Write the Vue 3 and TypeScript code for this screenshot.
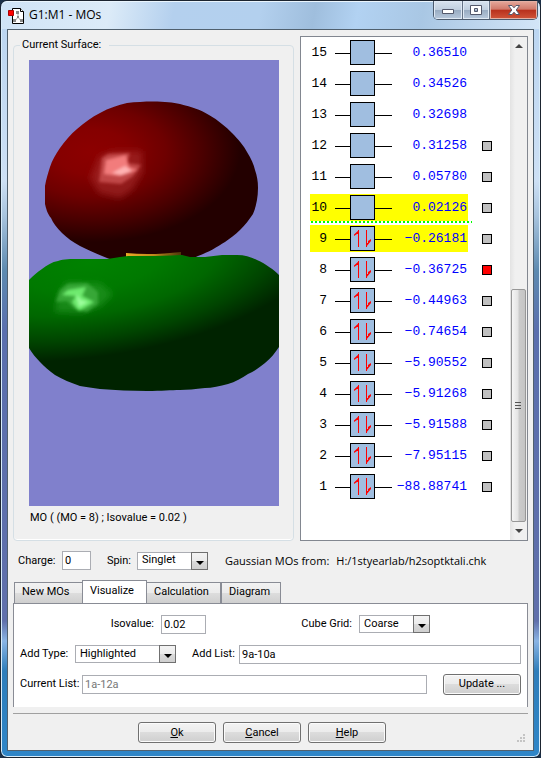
<script setup lang="ts">
import { ref } from 'vue'

interface Level {
  id: number
  energy: string
  occupied: boolean
  cube: boolean
}

const energies: string[] = [
  '0.36510', '0.34526', '0.32698', '0.31258', '0.05780', '0.02126',
  '-0.26181', '-0.36725', '-0.44963', '-0.74654', '-5.90552',
  '-5.91268', '-5.91588', '-7.95115', '-88.88741',
]

const levels: Level[] = energies.map((energy, i) => {
  const id = energies.length - i
  return { id, energy: energy.replace('-', '−'), occupied: id <= 9, cube: id <= 12 }
})

const highlighted = ref<number[]>([9, 10])
const current = ref<number>(8)
const tabs: string[] = ['New MOs', 'Visualize', 'Calculation', 'Diagram']
const activeTab = ref<string>('Visualize')
const charge = ref('0')
const spin = ref('Singlet')
const isovalue = ref('0.02')
const cubeGrid = ref('Coarse')
const addType = ref('Highlighted')
const addList = ref('9a-10a')
const currentList = ref('1a-12a')

function toggle(id: number): void {
  highlighted.value = highlighted.value.includes(id)
    ? highlighted.value.filter((n) => n !== id)
    : [...highlighted.value, id]
}
</script>

<template>
  <div class="window">
    <header class="titlebar">
      <svg class="app-icon" width="18" height="18" viewBox="0 0 18 18" aria-hidden="true">
        <path d="M4.500 1.500H12.500L15.500 4.500V16.500H4.500Z" fill="#fff" stroke="#000" />
        <path d="M12.500 1.500V4.500H15.500" fill="#fff" stroke="#000" />
        <path d="M10 5V10L7 14M10 10L13 14" fill="none" stroke="#aaa" />
        <path d="M8 4h3v3h-3zM9 9h2v2h-2zM5 12h3v3h-3zM12 12h3v3h-3z" fill="#888" />
        <path d="M.5 3.500h5v5h-5z" fill="#f00" stroke="#a00" />
      </svg>
      <h1 class="title">G1:M1 - MOs</h1>
      <div class="caption-buttons">
        <button type="button" class="cap" aria-label="Minimize">
          <svg width="14" height="12" viewBox="0 0 14 12"><path d="M1.500 5.500h11v4h-11z" fill="#fff" stroke="#53586b" /></svg>
        </button>
        <button type="button" class="cap" aria-label="Maximize">
          <svg width="14" height="12" viewBox="0 0 14 12"><path d="M1.500 1.500h11v9h-11zM5.500 4.500v3h3v-3z" fill="#fff" fill-rule="evenodd" stroke="#53586b" /></svg>
        </button>
        <button type="button" class="cap close" aria-label="Close">
          <svg width="14" height="12" viewBox="0 0 14 12"><path d="M1.500 1.500H5L7 3.800L9 1.500H12.500L9.200 6L12.500 10.500H9L7 8.200L5 10.500H1.500L4.800 6Z" fill="#fff" stroke="#53586b" /></svg>
        </button>
      </div>
    </header>

    <main class="client">
      <section class="upper">
        <fieldset class="surface">
          <legend>Current Surface:</legend>
          <svg class="canvas" viewBox="29 60 250 446" role="img" aria-label="Molecular orbital surface">
            <defs>
              <radialGradient id="red" gradientUnits="userSpaceOnUse" cx="0" cy="0" r="1" gradientTransform="translate(92 152) scale(148 90)">
                <stop offset="0" stop-color="#8c0000" />
                <stop offset=".25" stop-color="#850000" />
                <stop offset=".5" stop-color="#6e0000" />
                <stop offset=".75" stop-color="#4a0000" />
                <stop offset="1" stop-color="#230000" />
              </radialGradient>
              <radialGradient id="green" gradientUnits="userSpaceOnUse" cx="0" cy="0" r="1" gradientTransform="translate(90 262) rotate(-8) scale(240 95)">
                <stop offset="0" stop-color="#008200" />
                <stop offset=".3" stop-color="#007900" />
                <stop offset=".55" stop-color="#006700" />
                <stop offset=".8" stop-color="#004400" />
                <stop offset="1" stop-color="#002300" />
              </radialGradient>
              <linearGradient id="bond">
                <stop offset="0" stop-color="#e9aa25" />
                <stop offset=".5" stop-color="#c08a1c" />
                <stop offset="1" stop-color="#4d360a" />
              </linearGradient>
              <filter id="soft" x="-30%" y="-30%" width="160%" height="160%"><feGaussianBlur stdDeviation="3" /></filter>
              <filter id="fine" x="-30%" y="-30%" width="160%" height="160%"><feGaussianBlur stdDeviation="1.500" /></filter>
            </defs>
            <rect x="29" y="60" width="250" height="446" fill="#8080cc" />
            <path fill="url(#red)" d="M153 101.500C165 101.500 173 102.500 180 104C192 107 201 110 209 115C218 120 226 127 232 133C238 139 244 146 247 152C251 158 254 165 255 170C257 176 258 181 258 188C258 198 256 207 253 214C249 220 245 225 240 230C235 235 230 238 225 242C217 247 209 252 198 256L185 262H118L107 258C97 254 88 250 80 246C73 242 67 238 62 233C57 228 53 223 51 218C47 213 46 208 45 204V186C46 180 48 173 50 167C52 160 56 154 60 148C65 141 71 134 77 129C84 123 92 117 100 113C109 108 118 105 127 103C136 102 144 101.500 153 101.500Z" />
            <g filter="url(#soft)">
              <path d="M90 178L99 156L112 151L142 151L143 172L132 190L120 198L99 193Z" fill="#a93232" opacity=".55" />
            </g>
            <g filter="url(#fine)">
              <path d="M99 182L102 158L108 154L130 153L127 163L141 165L133 176L121 184Z" fill="#cf5555" opacity=".75" />
              <path d="M104 174L106 160L126 155L129 167L138 170L120 176Z" fill="#f27c7c" />
              <path d="M112 173L125 166L132 171L121 175Z" fill="#ffb3b3" />
            </g>
            <path d="M126 253C145 255 163 254 181 252V260H126Z" fill="url(#bond)" />
            <path fill="url(#green)" d="M29 280C33 276 37 272 42 269C47 265 52 262 58 261C64 259 70 259 80 259H107C112 258 116 258 120 257L128 256H155L171 255.500L182 255L190 257H205L222 255H237C245 255 251 257 257 260C266 264 274 270 279 275V347C275 353 271 358 265 363C260 367 255 371 248 374C242 378 235 382 228 384C220 386 212 388 205 388C195 389 187 390 180 390C171 390 162 391 147 391C132 391 115 390 100 389C93 388 86 387 80 386C71 383 62 379 55 375C49 371 44 366 40 362C36 358 32 353 29 348Z" />
            <g filter="url(#soft)">
              <path d="M55 312L58 294L66 282L100 283L113 294L101 306L82 313Z" fill="#279a27" opacity=".6" />
            </g>
            <g filter="url(#fine)">
              <path d="M56 302L60 290L68 284L87 283L98 292L98 304L87 312L75 309L67 301Z" fill="#3fae3f" opacity=".8" />
              <path d="M62 295L68 290L86 287L82 296L94 302L79 311L72 302L76 296Z" fill="#6eea6e" />
              <path d="M76 294L81 300L88 302L79 307Z" fill="#9dff9d" />
            </g>
          </svg>
          <p class="caption">MO ( (MO = 8) ; Isovalue = 0.02 )</p>
        </fieldset>

        <div class="diagram">
          <div class="levels">
            <div v-for="level in levels" :key="level.id" class="level" :class="{ fermi: level.id === 10 }">
              <button type="button" class="orbital" :class="{ marked: highlighted.includes(level.id) }" @click="toggle(level.id)">
                <span class="number">{{ level.id }}</span>
                <svg class="box" width="58" height="27" viewBox="0 0 58 27" aria-hidden="true">
                  <path d="M0 14.500H57" stroke="#000" />
                  <rect x="15.500" y="1.500" width="24" height="24" fill="#a0bee0" stroke="#000" />
                  <template v-if="level.occupied">
                    <path d="M23.500 22V5M31.500 5V22" fill="none" stroke="#f00" />
                    <path d="M24 5V9H22L19 11V9.500Z" fill="#f00" />
                    <path d="M31 22V18H33L33 16L36 14V16Z" fill="#f00" />
                  </template>
                </svg>
                <span class="energy">{{ level.energy }}</span>
              </button>
              <input v-if="level.cube" v-model="current" type="radio" name="current" class="cube" :value="level.id" :aria-label="'Show orbital ' + level.id" />
            </div>
          </div>
          <div class="scrollbar">
            <button type="button" class="arrow" aria-label="Scroll up">
              <svg width="8" height="4" viewBox="0 0 8 4"><path d="M4 0L8 4H0Z" fill="#444" /></svg>
            </button>
            <div class="track">
              <div class="thumb">
                <svg width="7" height="9" viewBox="0 0 7 9"><path d="M0 1.500H6M0 4.500H6M0 7.500H6" stroke="#555" /></svg>
              </div>
            </div>
            <button type="button" class="arrow" aria-label="Scroll down">
              <svg width="8" height="4" viewBox="0 0 8 4"><path d="M0 0H8L4 4Z" fill="#444" /></svg>
            </button>
          </div>
        </div>
      </section>

      <section class="molecule">
        <label for="charge">Charge:</label>
        <input id="charge" v-model="charge" class="field" type="text" />
        <label for="spin">Spin:</label>
        <span class="combo">
          <select id="spin" v-model="spin"><option>Singlet</option><option>Triplet</option></select>
          <span class="drop"><svg width="8" height="4" viewBox="0 0 8 4"><path d="M0 0H8L4 4Z" /></svg></span>
        </span>
        <p class="source"><span>Gaussian MOs from:</span><span>H:/1styearlab/h2soptktali.chk</span></p>
      </section>

      <nav class="tabs" role="tablist">
        <button v-for="tab in tabs" :key="tab" type="button" role="tab" class="tab" :class="{ active: tab === activeTab }" :aria-selected="tab === activeTab" @click="activeTab = tab">{{ tab }}</button>
      </nav>

      <section class="panel" role="tabpanel">
        <div class="row grid-row">
          <label for="iso">Isovalue:</label>
          <input id="iso" v-model="isovalue" class="field" type="text" />
          <label for="grid">Cube Grid:</label>
          <span class="combo">
            <select id="grid" v-model="cubeGrid"><option>Coarse</option><option>Medium</option><option>Fine</option></select>
            <span class="drop"><svg width="8" height="4" viewBox="0 0 8 4"><path d="M0 0H8L4 4Z" /></svg></span>
          </span>
        </div>
        <div class="row add-row">
          <label for="type">Add Type:</label>
          <span class="combo">
            <select id="type" v-model="addType"><option>Highlighted</option><option>Other</option></select>
            <span class="drop"><svg width="8" height="4" viewBox="0 0 8 4"><path d="M0 0H8L4 4Z" /></svg></span>
          </span>
          <label for="add" class="add-label">Add List:</label>
          <input id="add" v-model="addList" class="field" type="text" />
        </div>
        <div class="row list-row">
          <label for="list">Current List:</label>
          <input id="list" v-model="currentList" class="field muted" type="text" readonly />
          <button type="button" class="push">Update ...</button>
        </div>
      </section>

      <footer class="actions">
        <div class="buttons">
          <button type="button" class="push"><u>O</u>k</button>
          <button type="button" class="push"><u>C</u>ancel</button>
          <button type="button" class="push"><u>H</u>elp</button>
        </div>
        <svg class="grip" width="9" height="9" viewBox="0 0 9 9" aria-hidden="true">
          <path d="M6 0h2v2h-2zM3 3h2v2h-2zM6 3h2v2h-2zM0 6h2v2h-2zM3 6h2v2h-2zM6 6h2v2h-2z" fill="#c4c4c4" />
        </svg>
      </footer>
    </main>
  </div>
</template>

<style>
body {
  background: #1c3048;
}
</style>

<style scoped>
* {
  box-sizing: border-box;
}
.window {
  display: flex;
  flex-direction: column;
  min-height: 100vh;
  padding: 0 6px 6px;
  border: 1px solid #1b2430;
  border-radius: 7px;
  box-shadow: inset 0 0 0 1px #d8ecfa;
  background: linear-gradient(180deg, #b9d4f0 0, #cde0f5 180px, #a8c4de 215px, #5d8ab0 270px, #5a6fae 330px, #6070ab 620px, #8ab4e4 640px, #2e7dba 670px, #2f86c8 100%);
  font: 11px/14px Roboto, "Liberation Sans", sans-serif;
  color: #000;
}
button,
input,
select {
  font: inherit;
  color: inherit;
  margin: 0;
}
p {
  margin: 0;
}
.titlebar {
  display: flex;
  align-items: flex-start;
  flex: none;
  height: 28px;
  margin: 0 -5px;
  padding-left: 6px;
  border-radius: 6px 6px 0 0;
  border-top: 1px solid #eaf5fd;
  background: linear-gradient(100deg, #cfe3f6 0, #dcebf8 20%, #b4d0ee 32%, #b3d0ee 48%, #9fbedd 58%, #b2d2f2 66%, #a9c7e4 78%, #d3e5f7 100%);
}
.app-icon {
  margin-top: 5px;
}
.title {
  flex: 1;
  margin: 0;
  padding: 4px 0 0 3px;
  font: 12px/18px "Open Sans", "Noto Sans", sans-serif;
}
.caption-buttons {
  display: flex;
  margin: -1px 1px 0 0;
  border: 1px solid #4c5b6e;
  border-top: 0;
  border-radius: 0 0 5px 5px;
  overflow: hidden;
}
.cap {
  display: flex;
  align-items: center;
  justify-content: center;
  width: 27px;
  height: 18px;
  padding: 0;
  border: 0;
  border-right: 1px solid #647285;
  background: linear-gradient(#d8e3ef 0, #c0cfdf 48%, #98abc1 50%, #b8c9dc 100%);
  box-shadow: inset 0 0 0 1px #dfe9f4;
}
.cap:first-child {
  width: 29px;
}
.close {
  width: 47px;
  border-right: 0;
  background: linear-gradient(#e5a99c 0, #d0796a 46%, #b8301c 50%, #d0553a 100%);
  box-shadow: inset 0 0 0 1px #e3b0a4;
}
.client {
  display: flex;
  flex-direction: column;
  flex: 1;
  padding: 6px 5px 0;
  border: 1px solid #50606e;
  background: #f0f0f0;
}
.upper {
  display: flex;
  gap: 6px;
}
.surface {
  flex: 1;
  min-width: 0;
  margin: 2px 0 0;
  padding: 8px 14px 0 15px;
  border: 1px solid #d5dfe5;
  border-radius: 4px;
  box-shadow: inset 0 -1px #fff;
}
.surface legend {
  margin-left: -9px;
  padding: 0 8px 0 2px;
}
.canvas {
  display: block;
  width: 100%;
}
.caption {
  padding: 5px 1px;
}
.diagram {
  display: flex;
  width: 228px;
  border: 1px solid #828790;
  background: #fff;
}
.levels {
  flex: 1;
  padding-bottom: 38px;
  font: 13px/27px "Liberation Mono", monospace;
}
.level {
  display: flex;
  align-items: center;
  height: 31px;
  padding-left: 9px;
  position: relative;
}
.fermi::after {
  content: "";
  position: absolute;
  left: 10px;
  right: 38px;
  bottom: 0;
  height: 2px;
  background: repeating-linear-gradient(90deg, #00ff00 0 2px, transparent 2px 4px);
}
.orbital {
  display: grid;
  grid-template-columns: 17px 58px 66px;
  column-gap: 8px;
  width: 158px;
  height: 27px;
  padding: 0;
  border: 0;
  background: transparent;
  text-align: right;
}
.orbital.marked {
  background: #ff0;
}
.box {
  display: block;
}
.energy {
  justify-self: end;
  white-space: nowrap;
  color: #00f;
}
.cube {
  appearance: none;
  width: 10px;
  height: 10px;
  margin-left: 14px;
  border: 1px solid #000;
  background: #c0c0c0;
}
.cube:checked {
  background: #f00;
}
.scrollbar {
  display: flex;
  flex-direction: column;
  width: 17px;
  padding: 0 1px;
  background: linear-gradient(90deg, #e3e3e3, #f0f0f0 30%);
}
.arrow {
  display: flex;
  align-items: center;
  justify-content: center;
  height: 18px;
  padding: 0;
  border: 0;
  background: transparent;
}
.track {
  display: flex;
  flex-direction: column;
  justify-content: flex-end;
  flex: 1;
}
.thumb {
  display: flex;
  align-items: center;
  justify-content: center;
  height: 50%;
  border: 1px solid #979797;
  border-radius: 2px;
  background: linear-gradient(90deg, #f5f5f5, #e4e4e4 45%, #cbcbcb 55%, #c4c4c4);
}
.molecule {
  display: grid;
  grid-template-columns: 44px 29px 30px 71px 1fr;
  align-items: center;
  padding: 10px 5px;
}
.molecule label[for="spin"] {
  text-align: right;
  padding-right: 6px;
}
.molecule {
  grid-template-columns: 44px 29px 46px 71px 1fr;
}
.source {
  display: flex;
  gap: 7px;
  padding-left: 17px;
  font: 11px/16px "Open Sans", "Noto Sans", sans-serif;
  white-space: nowrap;
}
label {
  white-space: nowrap;
}
.field {
  width: 100%;
  min-width: 0;
  height: 19px;
  padding: 0 2px;
  border: 1px solid #abadb3;
  border-radius: 0;
  background: #fff;
}
.muted {
  color: #777;
}
.combo {
  display: grid;
  height: 18px;
}
.combo select {
  grid-area: 1 / 1;
  appearance: none;
  width: 100%;
  min-width: 0;
  height: 18px;
  padding: 0 20px 1px 4px;
  border: 1px solid #abadb3;
  border-radius: 0;
  background: #fff;
}
.drop {
  grid-area: 1 / 1;
  justify-self: end;
  display: flex;
  align-items: flex-end;
  justify-content: center;
  width: 17px;
  padding-bottom: 4px;
  border: 1px solid #707070;
  background: linear-gradient(#f3f3f3 0, #ebebeb 50%, #dadada 50%, #cfcfcf);
  pointer-events: none;
}
.tabs {
  display: flex;
  align-items: flex-end;
  height: 24px;
  margin: 0 0 -1px 1px;
}
.tab {
  height: 22px;
  padding: 0 8px 2px 7px;
  border: 1px solid #898c95;
  background: linear-gradient(#f2f2f2 0, #ebebeb 50%, #dddddd 50%, #cfcfcf);
  text-align: left;
}
.tab:nth-child(1) {
  width: 68px;
  border-right: 0;
}
.tab:nth-child(2) {
  width: 65px;
}
.tab:nth-child(3) {
  width: 74px;
  border-left: 0;
}
.tab:nth-child(4) {
  width: 60px;
}
.tab.active {
  height: 24px;
  border-bottom: 0;
  padding-bottom: 4px;
  background: #fff;
}
.panel {
  display: grid;
  gap: 8px;
  padding: 9px 6px 12px;
  border: 1px solid #898c95;
  border-bottom: 0;
  background: #fff;
}
.row {
  display: grid;
  align-items: center;
  min-height: 22px;
}
.grid-row {
  grid-template-columns: 134px 45px 139px 71px;
  column-gap: 7px;
}
.grid-row label {
  text-align: right;
}
.add-row {
  grid-template-columns: 48px 101px 49px 1fr;
  column-gap: 7px;
}
.add-label {
  padding-left: 9px;
}
.list-row {
  grid-template-columns: 62px 1fr 94px;
}
.list-row .push {
  justify-self: end;
}
.push {
  width: 78px;
  height: 21px;
  padding: 0;
  border: 1px solid #707070;
  border-radius: 3px;
  background: linear-gradient(#f3f3f3 0, #ebebeb 50%, #dcdcdc 50%, #cfcfcf);
  box-shadow: inset 0 0 0 1px #fbfbfb;
}
.actions {
  display: flex;
  align-items: flex-end;
  margin-top: 6px;
  padding: 8px 2px 7px 0;
  border-top: 1px solid #a0a0a0;
}
.buttons {
  display: flex;
  justify-content: center;
  flex: 1;
  gap: 7px;
  padding-right: 6px;
}
</style>
